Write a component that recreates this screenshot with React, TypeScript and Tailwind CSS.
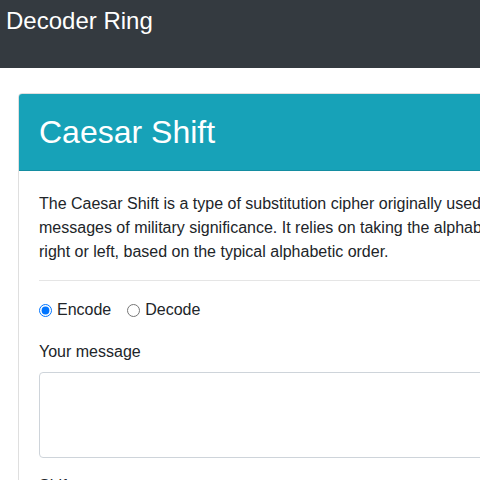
import React from "react";

export default function App() {
  return (
    <div className="w-full h-[480px] overflow-hidden bg-white font-['Liberation_Sans',Arial,sans-serif] text-[#212529]">
      <nav className="h-[68px] bg-[#343a40] pl-[6px] pt-[3px]">
        <span className="text-[24px] leading-[36px] text-white">Decoder Ring</span>
      </nav>
      <div className="pl-[18px] pt-[25px]">
        <div className="w-[698px] border border-[rgba(0,0,0,0.125)] rounded-[4px] overflow-hidden">
          <div className="bg-[#17a2b8] px-[20px] pt-[19px] pb-[19px] border-b border-[rgba(0,0,0,0.125)]">
            <h2 className="text-[32px] leading-[38px] text-white font-normal">Caesar Shift</h2>
          </div>
          <div className="px-[20px] pt-[21px] pb-[20px]">
            <p className="text-[16px] leading-6 mb-4">
              The Caesar Shift is a type of substitution cipher originally used by Julius Caesar to protect
              messages of military significance. It relies on taking the alphabet and "shifting" letters to the
              right or left, based on the typical alphabetic order.
            </p>
            <hr className="border-0 border-t border-[rgba(0,0,0,0.1)] mb-[17px]" />
            <div className="flex items-center h-6 mb-[18px] text-[16px]">
              <label className="flex items-center">
                <input type="radio" name="mode" defaultChecked className="w-[13px] h-[13px] m-0 mr-[5px]" />
                <span>Encode</span>
              </label>
              <label className="flex items-center ml-[16px]">
                <input type="radio" name="mode" className="w-[13px] h-[13px] m-0 mr-[5px]" />
                <span>Decode</span>
              </label>
            </div>
            <div className="mb-4">
              <label className="block text-[16px] leading-6 mb-[8px]">Your message</label>
              <textarea
                rows={3}
                className="block w-full h-[86px] border border-[#ced4da] rounded-[4px] px-3 py-[6px] resize-none outline-none"
              />
            </div>
            <div>
              <label className="block text-[16px] leading-6 mb-2">Shift amount</label>
            </div>
          </div>
        </div>
      </div>
    </div>
  );
}
